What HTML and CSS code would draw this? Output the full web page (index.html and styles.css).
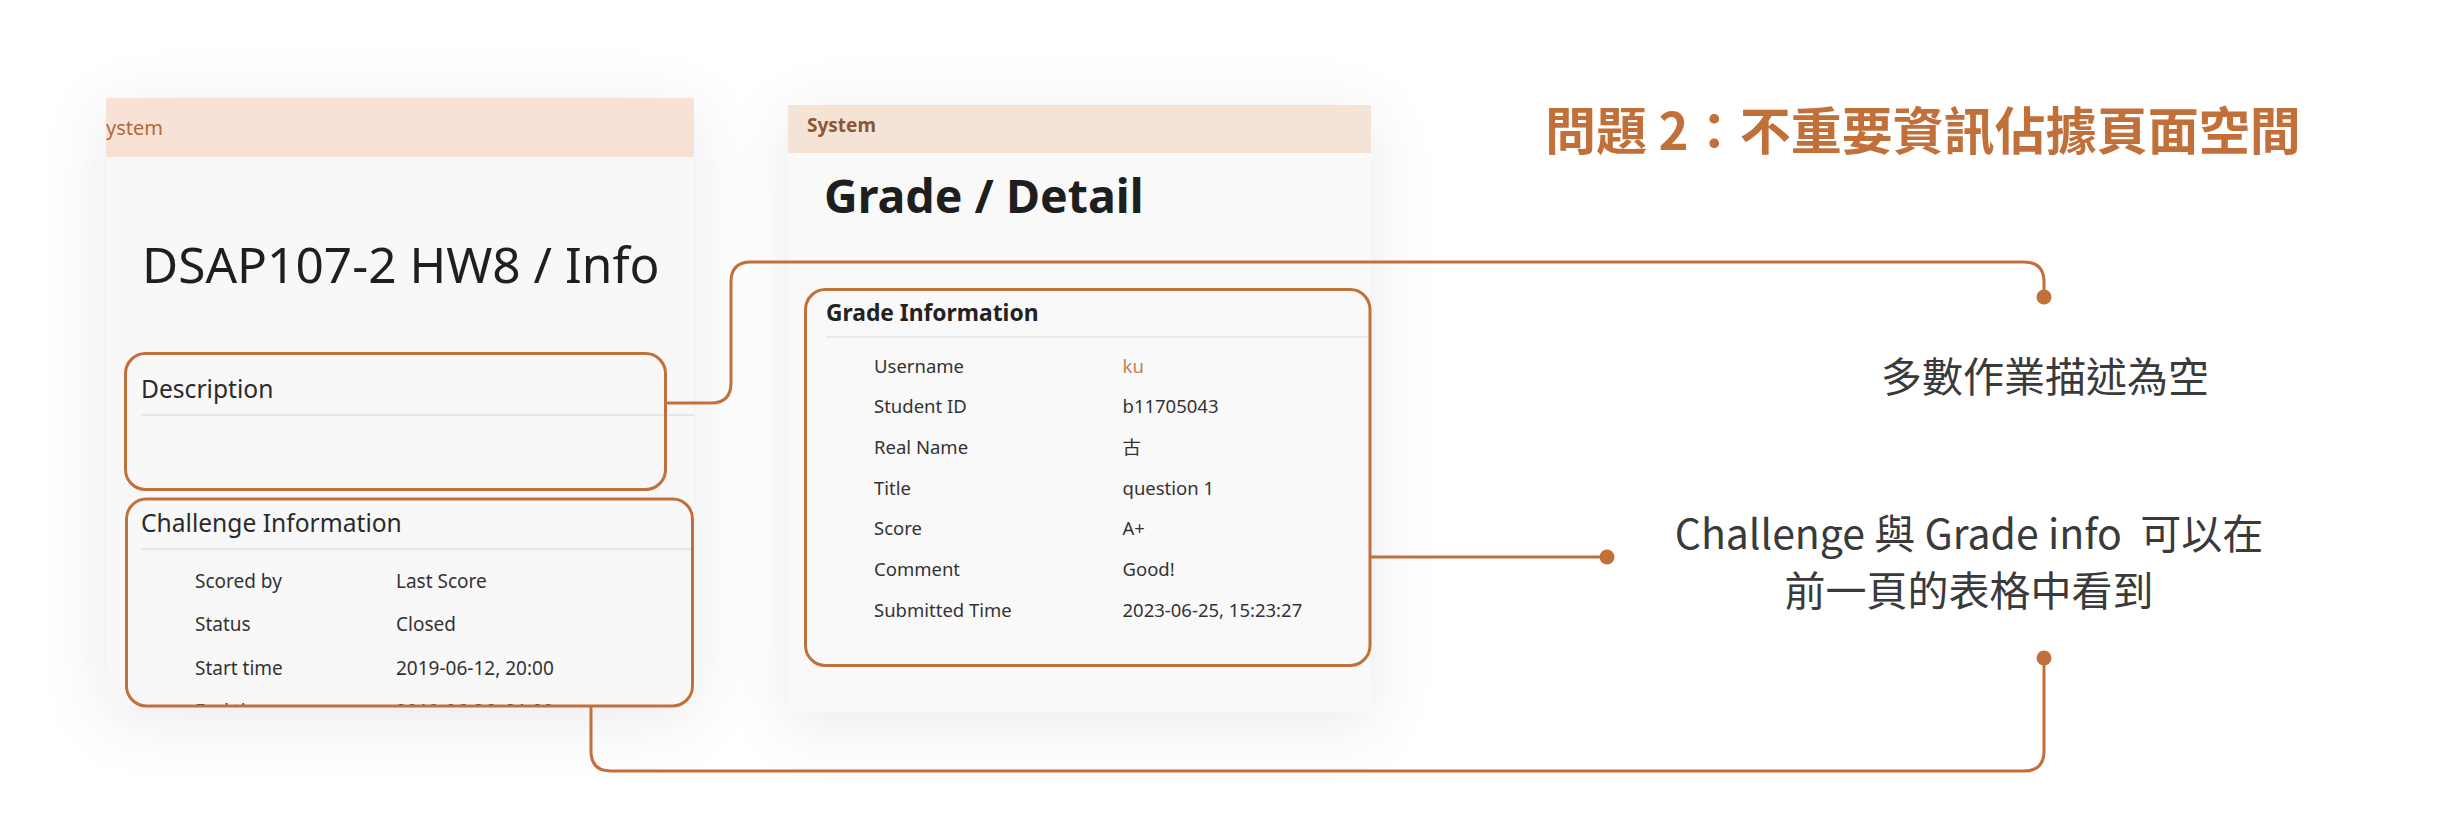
FILE: index.html
```html
<!DOCTYPE html>
<html lang="zh-Hant">
<head>
<meta charset="utf-8">
<title>問題 2：不重要資訊佔據頁面空間</title>
<link rel="stylesheet" href="styles.css">
</head>
<body>
<div class="slide">
  <div class="panel panel-info">
    <div class="hdr hdr-info">System</div>
    <h1 class="info-title">DSAP107-2 HW8 / Info</h1>
    <section class="sec sec-desc">
      <h2 class="sec-head">Description</h2>
      <div class="desc-body"></div>
    </section>
    <section class="sec sec-chal">
      <h2 class="sec-head">Challenge Information</h2>
      <div class="rows info-rows">
        <span>Scored by</span><span>Last Score</span>
        <span>Status</span><span>Closed</span>
        <span>Start time</span><span>2019-06-12, 20:00</span>
        <span>End time</span><span>2019-06-26, 21:00</span>
      </div>
    </section>
  </div>

  <div class="panel panel-grade">
    <div class="hdr hdr-grade">System</div>
    <h1 class="grade-title">Grade / Detail</h1>
    <section class="gsec">
      <h2 class="gsec-head">Grade Information</h2>
      <div class="rows grade-rows">
        <span>Username</span><span class="link">ku</span>
        <span>Student ID</span><span>b11705043</span>
        <span>Real Name</span><span>古</span>
        <span>Title</span><span>question 1</span>
        <span>Score</span><span>A+</span>
        <span>Comment</span><span>Good!</span>
        <span>Submitted Time</span><span>2023-06-25, 15:23:27</span>
      </div>
    </section>
  </div>

  <div class="aside">
    <h1 class="slide-title">問題 2：不重要資訊佔據頁面空間</h1>
    <p class="note note-1">多數作業描述為空</p>
    <p class="note note-2">Challenge 與 Grade info&nbsp; 可以在<br>前一頁的表格中看到</p>
  </div>

  <svg class="overlay" width="2452" height="828" viewBox="0 0 2452 828" xmlns="http://www.w3.org/2000/svg">
    <g fill="none" stroke="#c2703a" stroke-width="3">
      <rect x="125.5" y="353.5" width="540" height="136" rx="20"/>
      <rect x="126.5" y="499" width="566" height="207" rx="20"/>
      <rect x="805.5" y="289.5" width="564.5" height="376" rx="20"/>
      <path d="M667 403 H711 Q731 403 731 383 V282 Q731 262 751 262 H2024 Q2044 262 2044 282 V296"/>
      <path d="M1371 557 H1606"/>
      <path d="M591 707 V751 Q591 771 611 771 H2024 Q2044 771 2044 751 V660"/>
    </g>
    <g fill="#c2703a">
      <circle cx="2044" cy="297" r="7.5"/>
      <circle cx="1607" cy="557" r="7.5"/>
      <circle cx="2044" cy="658" r="7.5"/>
    </g>
  </svg>
</div>
</body>
</html>
```

FILE: styles.css
```css
html, body {
  margin: 0;
  padding: 0;
  background: #ffffff;
}

body {
  width: 2452px;
  height: 828px;
  overflow: hidden;
  font-family: "Noto Sans", "Noto Sans CJK TC", sans-serif;
  color: #2e2e2e;
}

.slide {
  position: relative;
  display: flex;
  align-items: flex-start;
  width: 2452px;
  height: 828px;
}

.panel {
  background: #f8f8f8;
  overflow: hidden;
  box-shadow: 0 12px 64px rgba(40, 50, 70, 0.1);
  flex: none;
}

.panel-info {
  margin: 98px 0 0 106px;
  width: 588px;
  height: 608px;
}

.panel-grade {
  margin: 105px 0 0 94px;
  width: 583px;
  height: 607px;
  background: #f9f9f9;
}

.hdr {
  white-space: nowrap;
}

.hdr-info {
  height: 59px;
  line-height: 60px;
  font-size: 20px;
  text-indent: -11px;
  color: #b0693d;
  background: #f8e2d5;
}

.hdr-grade {
  height: 48px;
  box-sizing: border-box;
  line-height: 41px;
  padding: 0 0 7px 19px;
  font-size: 19px;
  font-weight: 700;
  color: #8a5636;
  background: #f5e3d6;
}

h1, h2, p {
  margin: 0;
}

.info-title {
  padding: 77px 0 0 36px;
  font-size: 49.6px;
  line-height: 60px;
  font-weight: 400;
  color: #1f1f1f;
  white-space: nowrap;
}

.sec {
  margin-left: 35px;
}

.sec-desc {
  margin-top: 78px;
}

.sec-head {
  font-size: 24.6px;
  line-height: 34px;
  font-weight: 400;
  color: #2a2a2a;
  padding-bottom: 8px;
  border-bottom: 2px solid #e7e7e7;
  white-space: nowrap;
}

.desc-body {
  height: 82px;
}

.sec-chal {
  margin-top: 8px;
}

.rows {
  display: grid;
  white-space: nowrap;
  color: #333333;
}

.info-rows {
  grid-template-columns: 201px 1fr;
  grid-auto-rows: 43.5px;
  line-height: 43.5px;
  font-size: 19px;
  padding-left: 54px;
  margin-top: 9.5px;
}

.grade-title {
  padding: 14px 0 0 36px;
  font-size: 46.5px;
  line-height: 56px;
  font-weight: 700;
  color: #1e1e1e;
  white-space: nowrap;
}

.gsec {
  margin: 74.5px 0 0 38px;
}

.gsec-head {
  font-size: 22.8px;
  line-height: 30px;
  font-weight: 700;
  color: #222222;
  padding-bottom: 8px;
  border-bottom: 2px solid #e9e9e9;
  white-space: nowrap;
}

.grade-rows {
  grid-template-columns: 248.5px 1fr;
  grid-auto-rows: 40.7px;
  line-height: 40.7px;
  font-size: 18.5px;
  padding-left: 48px;
  margin-top: 8px;
}

.link {
  color: #c8804d;
}

.aside {
  margin-left: 174px;
  flex: none;
  font-family: "Noto Sans CJK TC", "Noto Sans", sans-serif;
}

.slide-title {
  margin-top: 98px;
  font-size: 51px;
  line-height: 61px;
  font-weight: 700;
  color: #c2703a;
  white-space: nowrap;
}

.note {
  font-size: 41px;
  font-weight: 400;
  color: #3a3a3a;
  white-space: nowrap;
}

.note-1 {
  margin: 190px 0 0 336px;
  line-height: 50px;
}

.note-2 {
  margin: 104px 0 0 104px;
  width: 640px;
  line-height: 57px;
  text-align: center;
}

.overlay {
  position: absolute;
  left: 0;
  top: 0;
  pointer-events: none;
}
```
